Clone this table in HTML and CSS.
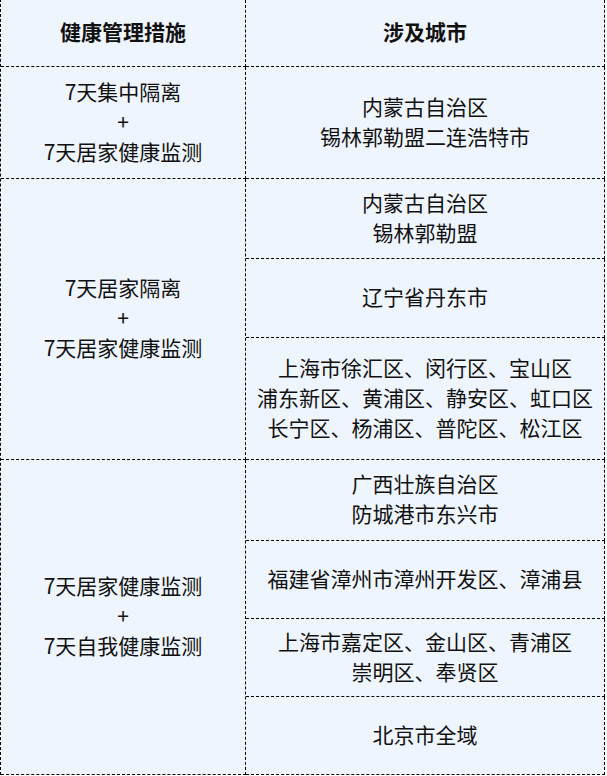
FILE: index.html
```html
<!DOCTYPE html>
<html lang="zh-CN">
<head>
<meta charset="utf-8">
<title>健康管理措施</title>
<link rel="stylesheet" href="styles.css">
</head>
<body>
<div class="table">
  <div class="cell head">健康管理措施</div>
  <div class="cell head right">涉及城市</div>

  <div class="cell left span1">7天集中隔离<br>+<br>7天居家健康监测</div>
  <div class="cell right">内蒙古自治区<br>锡林郭勒盟二连浩特市</div>

  <div class="cell left span2">7天居家隔离<br>+<br>7天居家健康监测</div>
  <div class="cell right">内蒙古自治区<br>锡林郭勒盟</div>
  <div class="cell right">辽宁省丹东市</div>
  <div class="cell right">上海市徐汇区、闵行区、宝山区<br>浦东新区、黄浦区、静安区、虹口区<br>长宁区、杨浦区、普陀区、松江区</div>

  <div class="cell left span3">7天居家健康监测<br>+<br>7天自我健康监测</div>
  <div class="cell right">广西壮族自治区<br>防城港市东兴市</div>
  <div class="cell right">福建省漳州市漳州开发区、漳浦县</div>
  <div class="cell right">上海市嘉定区、金山区、青浦区<br>崇明区、奉贤区</div>
  <div class="cell right">北京市全域</div>
</div>
</body>
</html>
```

FILE: styles.css
```css
html, body {
  margin: 0;
  padding: 0;
  background: #ffffff;
}

.table {
  display: grid;
  grid-template-columns: 245px 359px;
  grid-template-rows: 67px 112px 80px 79px 122px 81px 78px 78px 78px;
  width: 605px;
  box-sizing: border-box;
  margin-top: -1px;
  border-top: 1px dashed #000;
  border-left: 1px dashed #000;
  background: #eff5fd;
  font-family: "Noto Sans CJK SC", "Noto Sans", sans-serif;
  font-size: 21px;
  line-height: 30px;
  color: #111;
}

.cell {
  box-sizing: border-box;
  border-right: 1px dashed #000;
  border-bottom: 1px dashed #000;
  display: flex;
  align-items: center;
  justify-content: center;
  text-align: center;
  padding-bottom: 4px;
}

.head {
  font-weight: bold;
}

.left {
  grid-column: 1;
}

.right {
  grid-column: 2;
}

.span1 {
  grid-row: 2;
}

.span2 {
  grid-row: 3 / span 3;
}

.span3 {
  grid-row: 6 / span 4;
}
```
